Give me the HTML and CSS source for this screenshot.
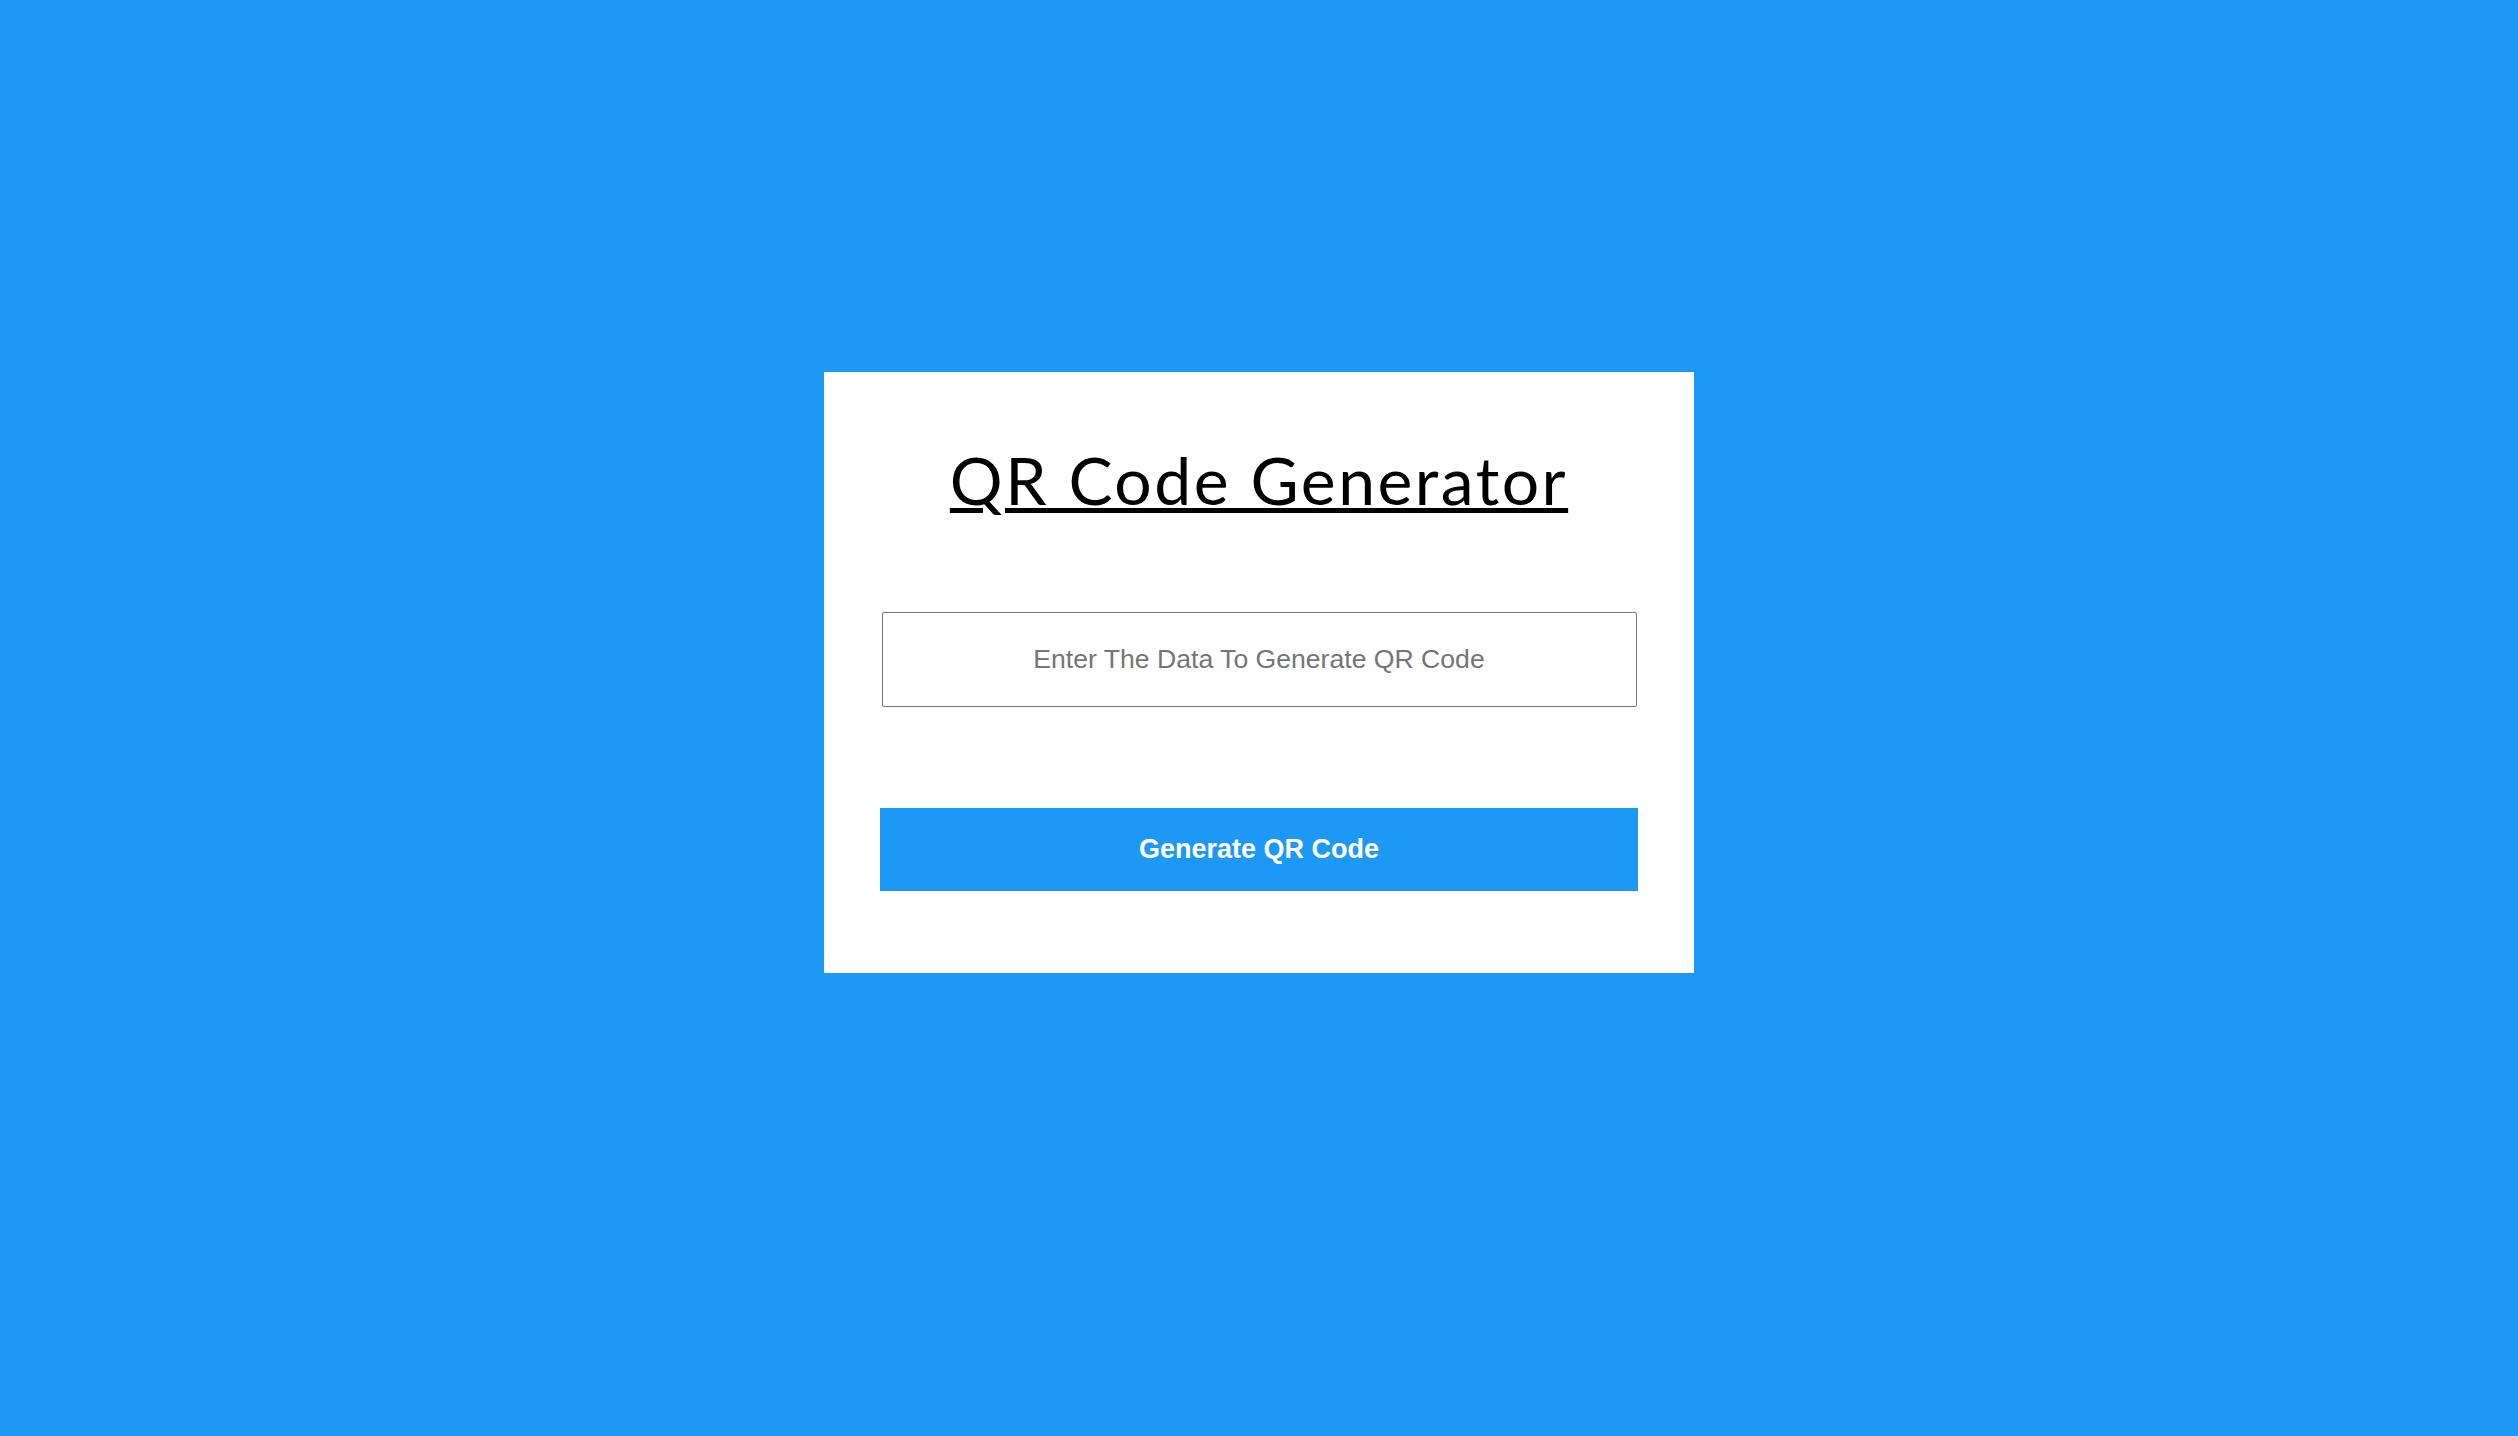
FILE: index.html
```html
<!DOCTYPE html>
<html lang="en">
<head>
<meta charset="utf-8">
<title>QR Code Generator</title>
<link rel="stylesheet" href="styles.css">
</head>
<body>
<main class="page">
  <section class="card">
    <h1 class="title">QR Code Generator</h1>
    <input class="data-input" type="text" placeholder="Enter The Data To Generate QR Code">
    <button class="generate-btn" type="button">Generate QR Code</button>
  </section>
</main>
</body>
</html>
```

FILE: styles.css
```css
* {
  box-sizing: border-box;
}

html, body {
  margin: 0;
  padding: 0;
}

body {
  background: #1d99f5;
  font-family: "Liberation Sans", Arial, sans-serif;
}

.page {
  min-height: 1436px;
  display: flex;
  justify-content: center;
  align-items: flex-start;
  padding-top: 372px;
}

.card {
  width: 870px;
  background: #ffffff;
  padding: 63px 56px 82px;
  display: flex;
  flex-direction: column;
  align-items: center;
}

.title {
  margin: 0;
  font-family: Lato, "Noto Sans", sans-serif;
  font-weight: 400;
  font-size: 66px;
  line-height: 90px;
  color: #000;
  text-decoration: underline;
  text-decoration-thickness: 5px;
  text-underline-offset: 3px;
  letter-spacing: 2.5px;
}

.data-input {
  margin-top: 87px;
  width: 755px;
  height: 95px;
  border: 1px solid #767676;
  border-radius: 2px;
  background: #fff;
  text-align: center;
  font-family: "Liberation Sans", Arial, sans-serif;
  font-size: 26.6px;
  color: #222;
  outline: none;
}

.data-input::placeholder {
  color: #757575;
}

.generate-btn {
  margin-top: 101px;
  width: 758px;
  height: 83px;
  border: none;
  background: #1d99f5;
  color: #fff;
  font-family: "Liberation Sans", Arial, sans-serif;
  font-weight: 700;
  font-size: 27px;
  cursor: pointer;
}
```
